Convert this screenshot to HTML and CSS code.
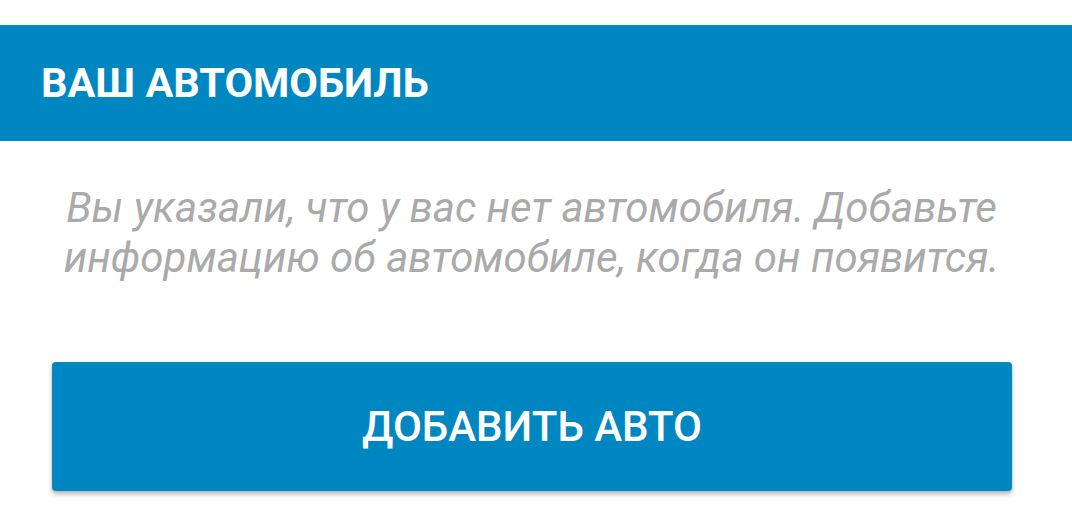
FILE: index.html
```html
<!DOCTYPE html>
<html lang="ru">
<head>
<meta charset="utf-8">
<link rel="stylesheet" href="styles.css">
</head>
<body>
<div class="page">
  <div class="header"><h1 class="title">ВАШ АВТОМОБИЛЬ</h1></div>
  <p class="note">Вы указали, что у вас нет автомобиля. Добавьте информацию об автомобиле, когда он появится.</p>
  <button class="add-btn">ДОБАВИТЬ АВТО</button>
</div>
</body>
</html>
```
FILE: styles.css
```css
html, body {
  margin: 0;
  padding: 0;
  background: #ffffff;
}
.page {
  width: 1072px;
  height: 516px;
  padding-top: 25px;
  box-sizing: border-box;
  display: flex;
  flex-direction: column;
  font-family: Roboto, "Liberation Sans", sans-serif;
  overflow: hidden;
}
.header {
  height: 116px;
  flex-shrink: 0;
  background: #0087c1;
  display: flex;
  align-items: center;
  padding-left: 41px;
}
.title {
  margin: 0;
  color: #ffffff;
  font-size: 41.5px;
  font-weight: 700;
  line-height: 1;
}
.note {
  margin: 42px 54px 0 45px;
  text-align: center;
  color: #aaaaaa;
  font-style: italic;
  font-size: 42px;
  line-height: 50px;
}
.add-btn {
  margin: 79px 60px 0 52px;
  width: 960px;
  height: 129px;
  flex-shrink: 0;
  border: none;
  border-radius: 4px;
  background: #0087c1;
  color: #ffffff;
  font-family: Roboto, "Liberation Sans", sans-serif;
  font-size: 42px;
  font-weight: 500;
  box-shadow: 0 3px 5px rgba(0, 0, 0, 0.3);
}
```
